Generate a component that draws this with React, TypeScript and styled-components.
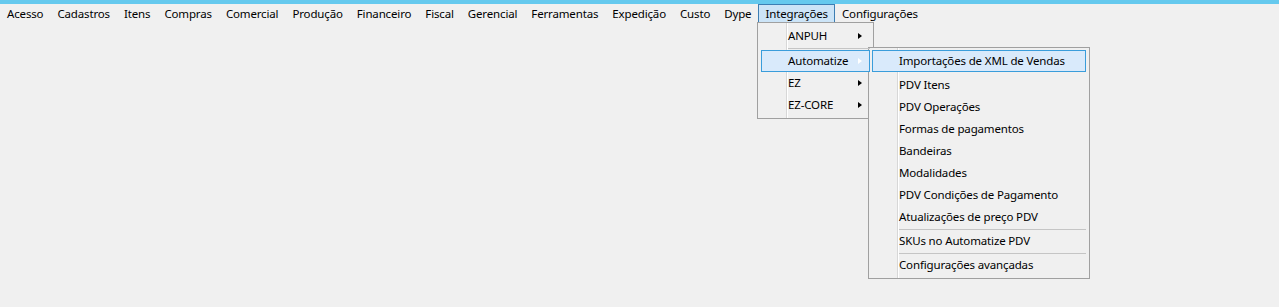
import styled, { createGlobalStyle } from "styled-components";

const GlobalStyle = createGlobalStyle`
  html, body {
    margin: 0;
    padding: 0;
    background: #f0f0f0;
  }
  body {
    font-family: "Noto Sans", "Open Sans", sans-serif;
    font-size: 11.5px;
    letter-spacing: -0.15px;
    color: #000;
  }
`;

const Window = styled.div`
  position: relative;
  width: 1279px;
  height: 307px;
  overflow: hidden;
  background: #f0f0f0;
`;

const TitleStrip = styled.div`
  height: 4px;
  background: #65c9ee;
`;

const MenuBar = styled.nav`
  display: flex;
  height: 19px;
  align-items: stretch;
`;

const BarItem = styled.div<{ $open?: boolean }>`
  display: flex;
  align-items: center;
  padding: 0 6px;
  border: 1px solid ${(p) => (p.$open ? "#3d7eb3" : "transparent")};
  background: ${(p) => (p.$open ? "#cce4f7" : "transparent")};
  white-space: nowrap;
  line-height: 17px;
`;

const Dropdown = styled.div<{ $left: number; $top: number; $width: number }>`
  position: absolute;
  left: ${(p) => p.$left}px;
  top: ${(p) => p.$top}px;
  width: ${(p) => p.$width}px;
  box-sizing: border-box;
  display: flex;
  flex-direction: column;
  padding: 2px;
  border: 1px solid #a0a0a0;
  background: #f0f0f0;

  &::before {
    content: "";
    position: absolute;
    top: 0;
    bottom: 0;
    left: 28px;
    width: 1px;
    background: #d7d7d7;
    border-right: 1px solid #fff;
  }
`;

const Item = styled.div<{ $hot?: boolean }>`
  position: relative;
  z-index: 1;
  display: flex;
  align-items: center;
  height: 22px;
  box-sizing: border-box;
  margin: 0 1px;
  padding: 0 0 1px 26px;
  border: 1px solid ${(p) => (p.$hot ? "#3a9ddb" : "transparent")};
  background: ${(p) => (p.$hot ? "#d9eafb" : "transparent")};
  white-space: nowrap;
`;

const Label = styled.span`
  flex: 1;
`;

const Arrow = styled.span<{ $light?: boolean }>`
  width: 0;
  height: 0;
  margin-right: 7px;
  border-top: 3.5px solid transparent;
  border-bottom: 3.5px solid transparent;
  border-left: 4px solid ${(p) => (p.$light ? "#ffffff" : "#000000")};
`;

const Separator = styled.div<{ $line?: boolean; $size: number }>`
  position: relative;
  z-index: 1;
  height: ${(p) => p.$size}px;
  display: flex;
  align-items: center;
  padding-left: 28px;

  &::after {
    content: "";
    flex: 1;
    height: 1px;
    margin-right: 1px;
    background: ${(p) => (p.$line ? "#c5c5c5" : "transparent")};
  }
`;

const barItems = [
  "Acesso",
  "Cadastros",
  "Itens",
  "Compras",
  "Comercial",
  "Produção",
  "Financeiro",
  "Fiscal",
  "Gerencial",
  "Ferramentas",
  "Expedição",
  "Custo",
  "Dype",
  "Integrações",
  "Configurações",
];

const automatizeItems = [
  "PDV Itens",
  "PDV Operações",
  "Formas de pagamentos",
  "Bandeiras",
  "Modalidades",
  "PDV Condições de Pagamento",
  "Atualizações de preço PDV",
];

export default function App() {
  return (
    <>
      <GlobalStyle />
      <Window>
        <TitleStrip />
        <MenuBar>
          {barItems.map((label) => (
            <BarItem key={label} $open={label === "Integrações"}>
              {label}
            </BarItem>
          ))}
        </MenuBar>

        <Dropdown $left={757} $top={22} $width={117}>
          <Item>
            <Label>ANPUH</Label>
            <Arrow />
          </Item>
          <Separator $line $size={3} />
          <Item $hot>
            <Label>Automatize</Label>
            <Arrow $light />
          </Item>
          <Item>
            <Label>EZ</Label>
            <Arrow />
          </Item>
          <Item>
            <Label>EZ-CORE</Label>
            <Arrow />
          </Item>
        </Dropdown>

        <Dropdown $left={868} $top={47} $width={222}>
          <Item $hot>
            <Label>Importações de XML de Vendas</Label>
          </Item>
          <Separator $size={2} />
          {automatizeItems.map((label) => (
            <Item key={label}>
              <Label>{label}</Label>
            </Item>
          ))}
          <Separator $line $size={2} />
          <Item>
            <Label>SKUs no Automatize PDV</Label>
          </Item>
          <Separator $line $size={2} />
          <Item>
            <Label>Configurações avançadas</Label>
          </Item>
        </Dropdown>
      </Window>
    </>
  );
}
